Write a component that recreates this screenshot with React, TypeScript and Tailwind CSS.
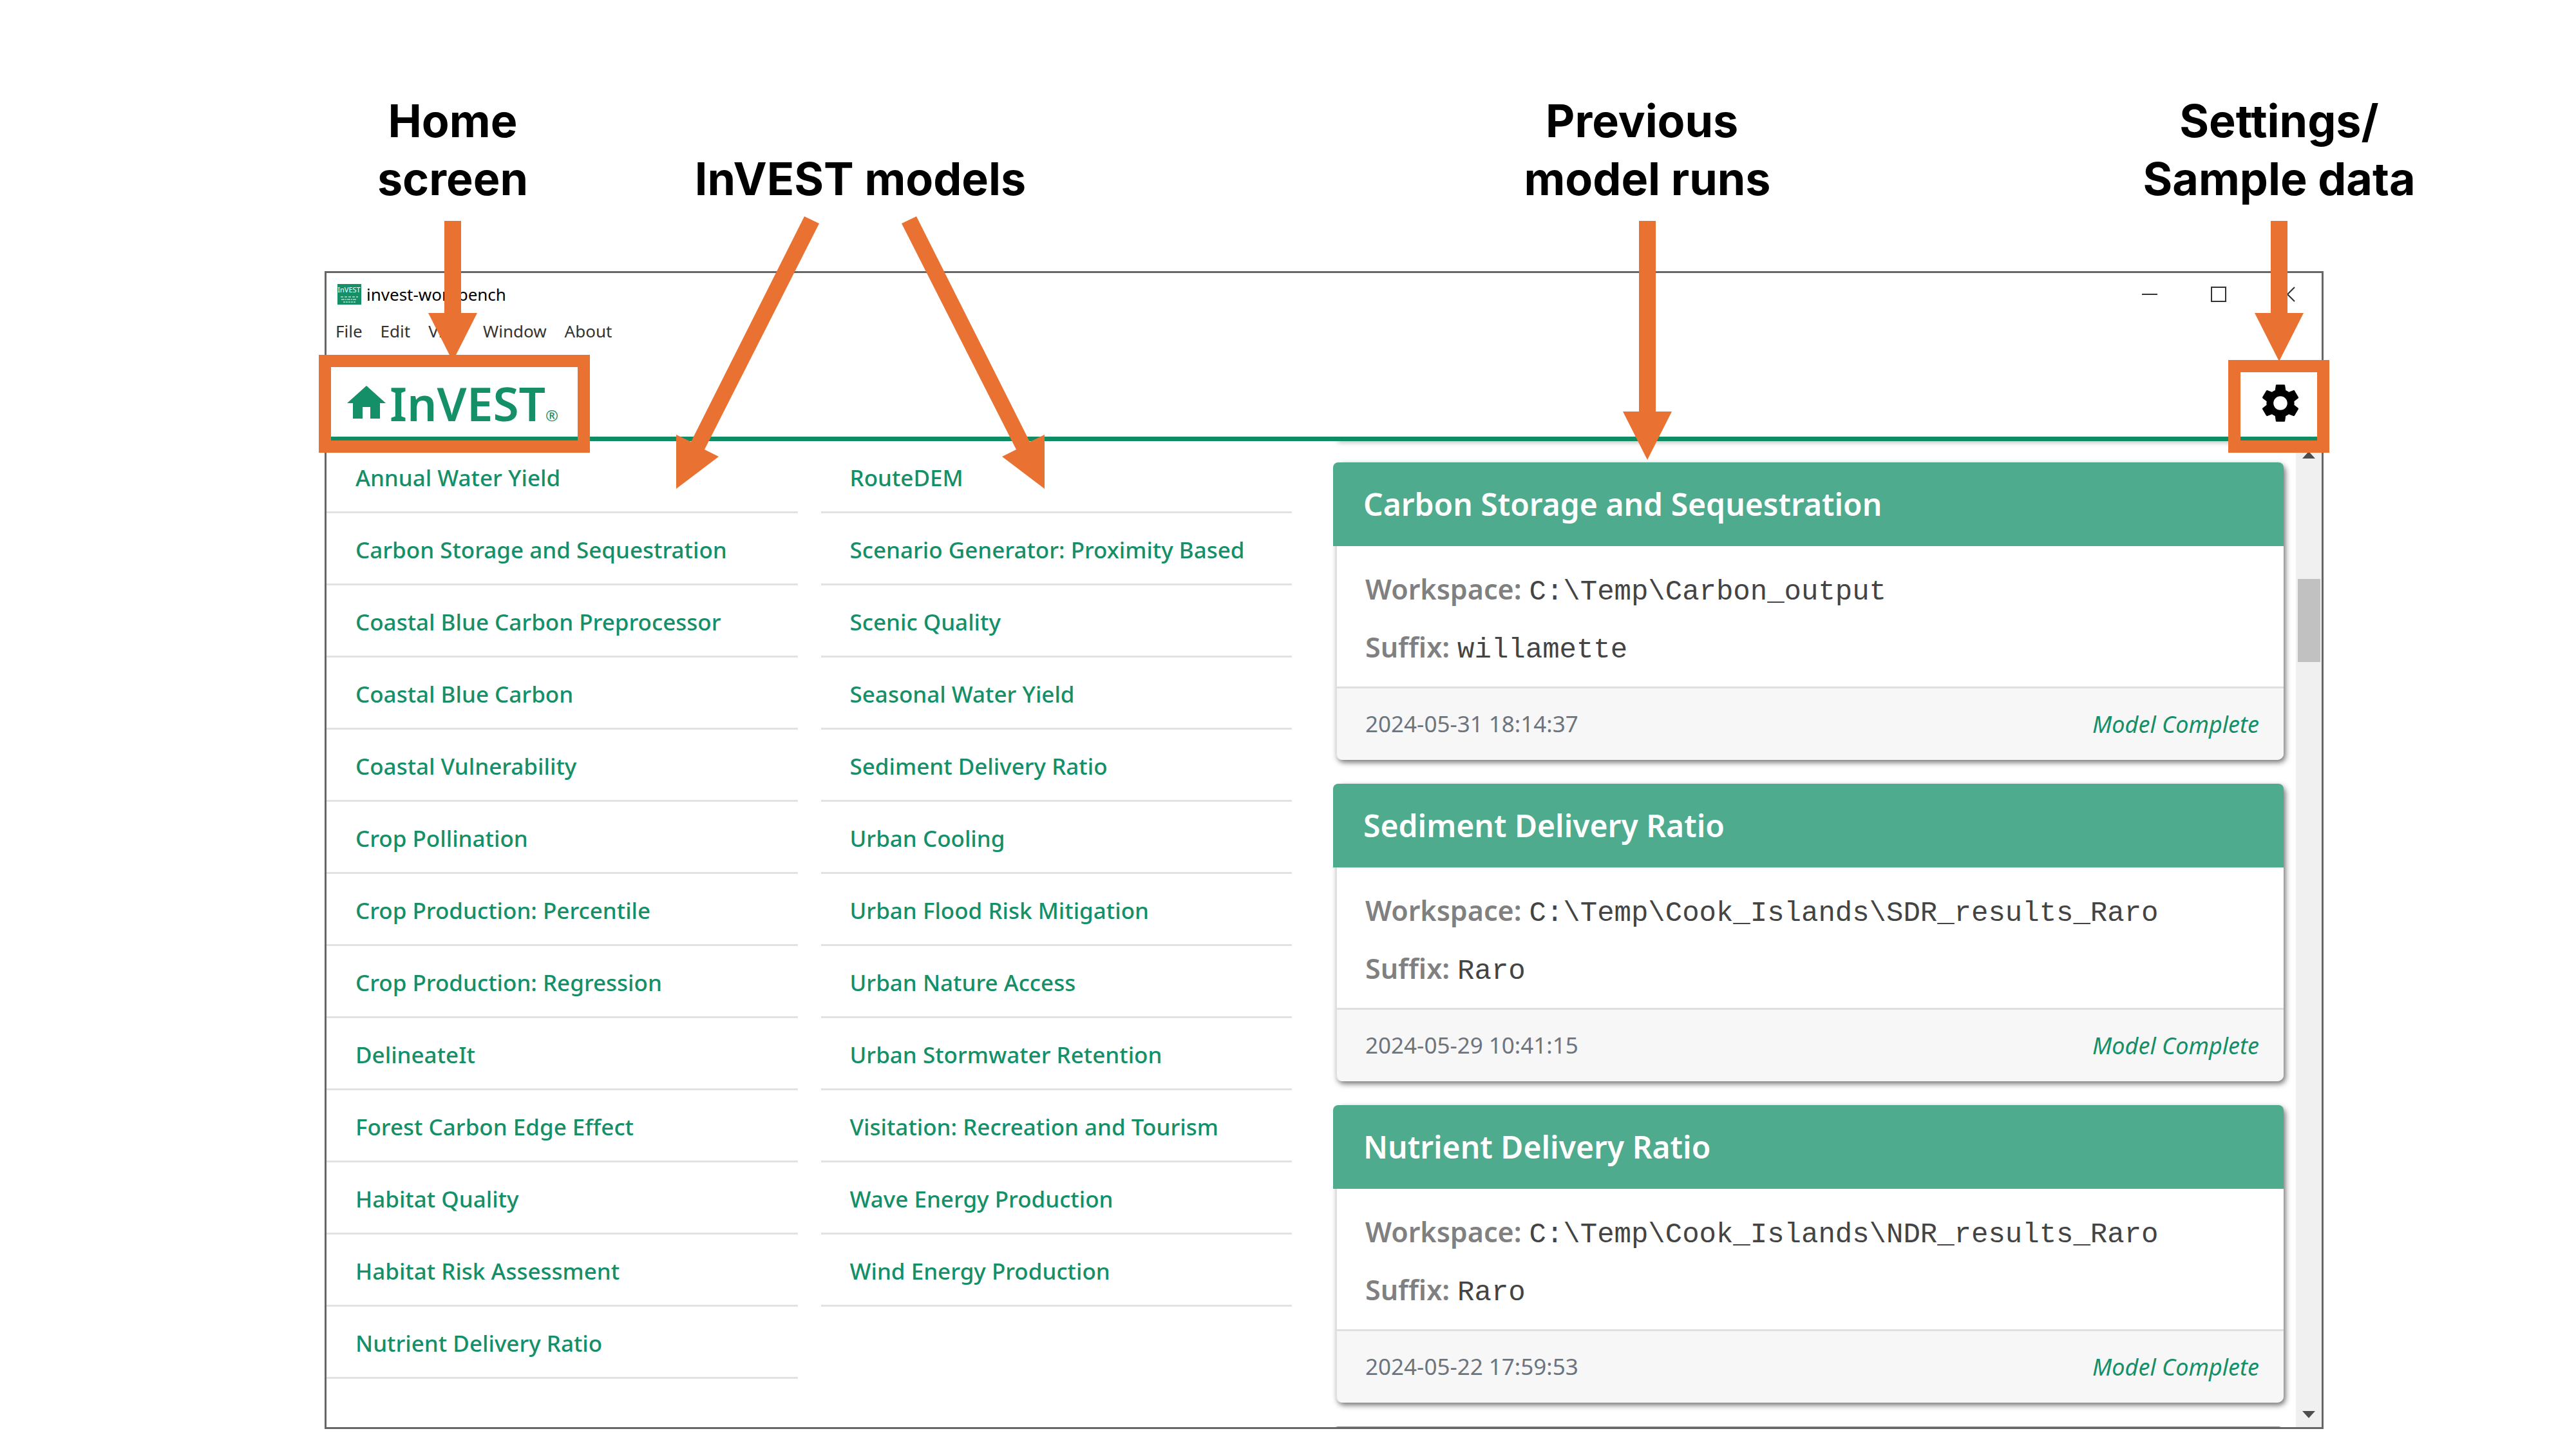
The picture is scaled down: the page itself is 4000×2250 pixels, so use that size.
import React from "react";
import { MdHome, MdSettings } from "react-icons/md";

const MODEL_COLUMNS = [
  [
    "Annual Water Yield",
    "Carbon Storage and Sequestration",
    "Coastal Blue Carbon Preprocessor",
    "Coastal Blue Carbon",
    "Coastal Vulnerability",
    "Crop Pollination",
    "Crop Production: Percentile",
    "Crop Production: Regression",
    "DelineateIt",
    "Forest Carbon Edge Effect",
    "Habitat Quality",
    "Habitat Risk Assessment",
    "Nutrient Delivery Ratio",
  ],
  [
    "RouteDEM",
    "Scenario Generator: Proximity Based",
    "Scenic Quality",
    "Seasonal Water Yield",
    "Sediment Delivery Ratio",
    "Urban Cooling",
    "Urban Flood Risk Mitigation",
    "Urban Nature Access",
    "Urban Stormwater Retention",
    "Visitation: Recreation and Tourism",
    "Wave Energy Production",
    "Wind Energy Production",
  ],
];

type Run = { model: string; workspace: string; suffix: string; time: string };

const RUNS: Run[] = [
  {
    model: "Carbon Storage and Sequestration",
    workspace: "C:\\Temp\\Carbon_output",
    suffix: "willamette",
    time: "2024-05-31 18:14:37",
  },
  {
    model: "Sediment Delivery Ratio",
    workspace: "C:\\Temp\\Cook_Islands\\SDR_results_Raro",
    suffix: "Raro",
    time: "2024-05-29 10:41:15",
  },
  {
    model: "Nutrient Delivery Ratio",
    workspace: "C:\\Temp\\Cook_Islands\\NDR_results_Raro",
    suffix: "Raro",
    time: "2024-05-22 17:59:53",
  },
];

const CARD_SHADOW = "shadow-[3px_4px_8px_rgba(0,0,0,0.55)]";

function DownArrow({ length }: { length: number }) {
  return (
    <svg
      aria-hidden="true"
      className="pointer-events-none absolute top-full left-1/2 z-20 mt-5 -translate-x-1/2"
      width={76}
      height={length}
      viewBox={`0 0 76 ${length}`}
      fill="#E97132"
    >
      <path d={`M25 0H51V${length - 75}H76L38 ${length}L0 ${length - 75}H25Z`} />
    </svg>
  );
}

function SplitArrows() {
  return (
    <svg
      aria-hidden="true"
      className="pointer-events-none absolute top-full left-1/2 z-20 mt-3 -translate-x-1/2"
      width={576}
      height={424}
      viewBox="0 0 576 424"
      fill="#E97132"
    >
      <path d="M201 1L224 12L46 363L68 374L2 424V340L25 351Z" />
      <path d="M375 1L352 12L530 363L508 374L574 424V340L551 351Z" />
    </svg>
  );
}

function Callout({ lines, children }: { lines: string[]; children: React.ReactNode }) {
  return (
    <div className="flex justify-center">
      <div className="relative self-end text-center">
        {lines.map((line) => (
          <p key={line} className="whitespace-pre">
            {line}
          </p>
        ))}
        {children}
      </div>
    </div>
  );
}

function AppIcon() {
  return (
    <svg aria-hidden="true" width={37} height={32} viewBox="0 0 37 32">
      <rect width="37" height="32" fill="#148F68" />
      <text x="18" y="13" fontSize="11" textAnchor="middle" fill="#fff" fontFamily="Noto Sans, sans-serif">
        InVEST
      </text>
      <g stroke="#b5dccd" strokeWidth="1.5">
        <path d="M5 20H32" strokeDasharray="4 2" />
        <path d="M6 24H30" strokeDasharray="5 1 2 1" />
        <path d="M9 28H28" strokeDasharray="3 1" />
      </g>
    </svg>
  );
}

function TitleBar() {
  const control = "flex w-[107px] items-center justify-center";
  return (
    <div className="flex h-[66px] items-stretch">
      <div className="flex flex-1 items-center gap-2 pl-[17px] text-[26px] text-black">
        <AppIcon />
        <span>invest-workbench</span>
      </div>
      <button type="button" aria-label="Minimize" className={control}>
        <svg width={24} height={24} viewBox="0 0 24 24" stroke="#333" strokeWidth="2">
          <path d="M0 12H24" />
        </svg>
      </button>
      <button type="button" aria-label="Maximize" className={control}>
        <svg width={24} height={24} viewBox="0 0 24 24" stroke="#333" strokeWidth="2" fill="none">
          <rect x="1" y="1" width="22" height="22" />
        </svg>
      </button>
      <button type="button" aria-label="Close" className={control}>
        <svg width={24} height={24} viewBox="0 0 24 24" stroke="#333" strokeWidth="2">
          <path d="M1 1L23 23M23 1L1 23" />
        </svg>
      </button>
    </div>
  );
}

function MenuBar() {
  return (
    <nav className="flex h-12 items-center gap-7 pl-3.5 text-[26px] text-[#333]">
      {["File", "Edit", "View", "Window", "About"].map((name) => (
        <button key={name} type="button">
          {name}
        </button>
      ))}
    </nav>
  );
}

function Header() {
  return (
    <header className="relative flex h-[147px] items-center justify-between border-b-[7px] border-[#0E8C63] pt-9 pr-7 pl-[26px]">
      <button type="button" className="flex items-center text-[#148F68]">
        <MdHome size={72} />
        <span className="flex items-baseline">
          <span className="text-[73px] leading-[80px] font-semibold">InVEST</span>
          <span className="text-[24px]">®</span>
        </span>
      </button>
      <button type="button" aria-label="Settings" className="text-black">
        <MdSettings size={72} />
      </button>
      <div className="pointer-events-none absolute top-[13px] -left-3 z-10 h-[152px] w-[421px] border-[19px] border-[#E97132]" />
      <div className="pointer-events-none absolute top-[21px] -right-3 z-10 h-[144px] w-[157px] border-[19px] border-[#E97132]" />
    </header>
  );
}

function ModelList() {
  return (
    <div className="grid grid-cols-2 items-start gap-x-9">
      {MODEL_COLUMNS.map((models, i) => (
        <ul key={i}>
          {models.map((model) => (
            <li key={model} className="border-b-[3px] border-[#E2E2E2]">
              <button
                type="button"
                className="flex h-[109px] w-full items-center pt-1.5 pl-[45px] text-left text-[35px] font-medium whitespace-nowrap text-[#148F68]"
              >
                {model}
              </button>
            </li>
          ))}
        </ul>
      ))}
    </div>
  );
}

function RunCard({ run }: { run: Run }) {
  return (
    <article className={`rounded-[10px] bg-white ${CARD_SHADOW}`}>
      <h2 className="-ml-1 flex h-[130px] items-center rounded-t-[8px] bg-[#4FAB8E] pl-[47px] text-[48px] font-semibold text-white">
        {run.model}
      </h2>
      <dl className="border-l-2 border-[#DFDFDF] pt-[22px] pb-4 pl-11 leading-[90px]">
        {[
          ["Workspace:", run.workspace],
          ["Suffix:", run.suffix],
        ].map(([label, value]) => (
          <div key={label} className="flex h-[90px] items-baseline gap-3">
            <dt className="text-[43px] font-semibold text-[#808080]">{label}</dt>
            <dd className="font-['Liberation_Mono',monospace] text-[44px] text-[#444]">{value}</dd>
          </div>
        ))}
      </dl>
      <footer className="flex h-[114px] items-center justify-between rounded-b-[10px] border-t-[3px] border-l-2 border-[#DFDFDF] bg-[#F7F7F7] pr-[38px] pl-11 text-[35px]">
        <time className="text-[#6C757D]">{run.time}</time>
        <em className="text-[36px] text-[#148F68] italic">Model Complete</em>
      </footer>
    </article>
  );
}

function Scrollbar() {
  return (
    <div className="flex w-10 flex-col items-center bg-[#F0F0F0]">
      <svg aria-hidden="true" className="mt-4" width={20} height={11} viewBox="0 0 20 11" fill="#4D4D4D">
        <path d="M10 0L20 11H0Z" />
      </svg>
      <div className="mt-[187px] h-[129px] w-[35px] bg-[#C1C1C1]" />
      <svg aria-hidden="true" className="mt-auto mb-3.5" width={20} height={11} viewBox="0 0 20 11" fill="#4D4D4D">
        <path d="M0 0H20L10 11Z" />
      </svg>
    </div>
  );
}

export default function App() {
  return (
    <main className="flex h-screen flex-col bg-white pb-[31px] font-['Noto_Sans','Open_Sans',sans-serif]">
      <section className="grid shrink-0 grid-cols-[328px_938px_1fr_456px] pt-[143px] pr-[233px] pb-[98px] pl-[539px] font-['Inter',sans-serif] text-[70px] leading-[90px] font-bold text-black">
        <Callout lines={["Home", "screen"]}>
          <DownArrow length={218} />
        </Callout>
        <Callout lines={["InVEST models"]}>
          <SplitArrows />
        </Callout>
        <Callout lines={["Previous ", "model runs"]}>
          <DownArrow length={371} />
        </Callout>
        <Callout lines={["Settings/", "Sample data"]}>
          <DownArrow length={218} />
        </Callout>
      </section>

      <section className="mr-[392px] ml-[504px] flex min-h-0 flex-1 flex-col border-3 border-[#666]">
        <TitleBar />
        <MenuBar />
        <Header />
        <div className="grid min-h-0 flex-1 grid-cols-[30fr_32fr] overflow-hidden">
          <ModelList />
          <div className="flex min-h-0 gap-[19px] overflow-hidden pl-[68px]">
            <div className="flex flex-1 flex-col gap-[37px]">
              <div className={`-mt-2 h-1 shrink-0 ${CARD_SHADOW}`} />
              {RUNS.map((run) => (
                <RunCard key={run.time} run={run} />
              ))}
              <div className="-ml-1 h-2 shrink-0 rounded-t-[8px] bg-[#4FAB8E]" />
            </div>
            <Scrollbar />
          </div>
        </div>
      </section>
    </main>
  );
}
